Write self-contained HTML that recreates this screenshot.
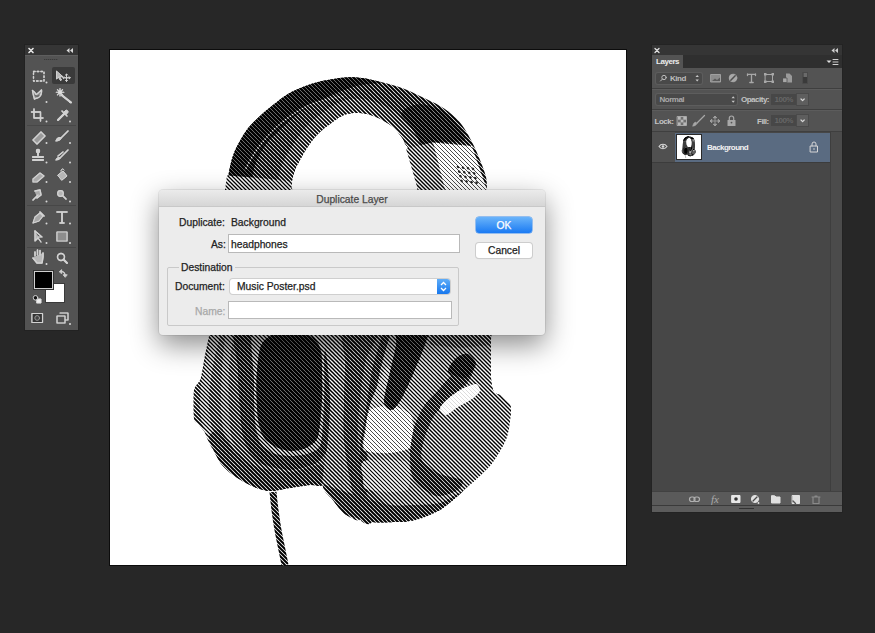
<!DOCTYPE html>
<html><head><meta charset="utf-8">
<style>
*{margin:0;padding:0;box-sizing:border-box}
html,body{width:875px;height:633px;overflow:hidden;background:#272727;font-family:"Liberation Sans",sans-serif}
.a{position:absolute}
.dt{font-size:10.3px;color:#222;white-space:nowrap;line-height:13px;-webkit-text-stroke:.25px currentColor}
.lt{font-size:8px;color:#cfcfcf;white-space:nowrap;line-height:10px}
</style></head>
<body>
<div class="a" style="left:25px;top:45px;width:53px;height:285px;background:#535353;box-shadow:0 0 0 1px #222"></div>
<div class="a" style="left:25px;top:45px;width:53px;height:10px;background:#353535"></div>
<div class="a" style="left:25px;top:55px;width:53px;height:1px;background:#5e5e5e"></div>
<div class="a" style="left:44px;top:59px;width:14px;height:1px;background:repeating-linear-gradient(90deg,#3a3a3a 0 1px,#4a4a4a 1px 2px)"></div>
<div class="a" style="left:52px;top:67px;width:23px;height:17px;background:#3a3a3a;border-radius:2px"></div>
<div class="a" style="left:27px;top:125px;width:49px;height:1px;background:#474747"></div>
<div class="a" style="left:27px;top:205px;width:49px;height:1px;background:#474747"></div>
<div class="a" style="left:27px;top:247px;width:49px;height:1px;background:#474747"></div>
<div class="a" style="left:45px;top:283px;width:20px;height:19.5px;background:#fff;border:1px solid #3a3a3a"></div>
<div class="a" style="left:34px;top:271px;width:19px;height:18px;background:#000;border:1px solid #cfcfcf;box-shadow:0 0 0 1px #333"></div>
<svg class="a" style="left:0;top:0" width="875" height="633" viewBox="0 0 875 633">
 <g fill="none" stroke="#d2d2d2" stroke-width="1.2" stroke-linecap="round" stroke-linejoin="round" style="filter:drop-shadow(0 0 .35px #bdbdbd)">
  <!-- title X and << -->
  <path d="M29 48.5l4 4M33 48.5l-4 4" stroke="#e0e0e0" stroke-width="1.3"/>
  <!-- marquee -->
  <rect x="33.5" y="71.5" width="10.5" height="9.5" stroke-dasharray="1.6 2.1" stroke-width="1.3"/>
  <!-- move -->
  <path d="M56.5 71.5v7.5l2-1.8 2 3.3 1-.6-2-3.2h3z" fill="#b8b8b8" stroke-width=".9"/>
  <path d="M66.5 74.5v6.5M63.2 77.8h6.6" stroke-width="1"/><path d="M65.5 75l1-1 1 1M65.5 80.5l1 1 1-1M63.7 76.8l-1 1 1 1M69.3 76.8l1 1-1 1" stroke-width=".8"/>
  <!-- lasso -->
  <path d="M32.5 90.5c1.5 1 3 2.5 3.5 4 1.5-.5 3.5-2.5 5.5-4.5.3 2.5-.5 5.5-3 7.5-1.5 1-3 .5-4 1.5-.8-2.5-1.5-5.5-2-8.5z" stroke-width="1.4" fill="#8a8a8a"/><path d="M35 95.5c1 .8 2.5 1 4 .3" stroke="#555" stroke-width="1"/>
  <!-- wand -->
  <path d="M61.5 95l9.5 7.5" stroke-width="2"/>
  <path d="M60 88.5v7.5M56.3 92.2h7.5M57.4 89.6l5.2 5.2M62.6 89.6l-5.2 5.2" stroke-width="1.1"/><circle cx="60" cy="92.2" r="1.8" fill="#dcdcdc" stroke="none"/>
  <!-- crop -->
  <path d="M34 109v9h9M31.5 112h9v9" stroke-width="1.4"/>
  <!-- eyedropper -->
  <path d="M58 120l6.5-6.5" stroke-width="2"/><path d="M63.5 112.5l2-2a1.6 1.6 0 0 1 2.2 2.2l-2 2z" fill="#cfcfcf" stroke-width="1"/><path d="M62 111l5 5" stroke-width="1.2"/>
  <!-- healing -->
  <path d="M33 140l8-8 4 4-8 8z" stroke-width="1.3" fill="#9a9a9a"/>
  <!-- brush -->
  <path d="M60 139l8-8" stroke-width="1.4"/><path d="M56 141c1-3 3-4 5-3-1 2-3 3-5 3z" fill="#cfcfcf"/>
  <!-- stamp -->
  <path d="M38 151v4M33 157h10M33 160h10" stroke-width="2"/><circle cx="38" cy="151" r="1.6" fill="#cfcfcf"/>
  <!-- history brush -->
  <path d="M60 158l8-8M58 156l5-4" stroke-width="1.3"/><path d="M56 160c1-2 3-3 4-2-1 2-2 2-4 2z" fill="#cfcfcf"/>
  <!-- eraser -->
  <path d="M33 179l7-6 4 3-7 6h-4z" fill="#aaaaaa" stroke-width="1.1"/>
  <!-- bucket -->
  <path d="M58 175l5-4 4 5-5 4z" fill="#b5b5b5" stroke-width="1"/><path d="M61 171c0-2 2-3 3-1" stroke-width="1"/>
  <!-- smudge -->
  <path d="M33 200l5-5M35 191l5-1 1 5-4 3" stroke-width="1.4" fill="#a8a8a8"/>
  <!-- dodge -->
  <circle cx="60.5" cy="193.5" r="2.8" fill="#b5b5b5"/><path d="M62.5 195.5l3.5 3.5" stroke-width="1.5"/>
  <!-- pen -->
  <path d="M33 223l2-6 5-4 3 3-4 5z" fill="#a8a8a8" stroke-width="1.1"/><path d="M40 212l4 4" stroke-width="1.5"/>
  <!-- T -->
  <path d="M57 212h10M62 212v11M60 223h4" stroke-width="1.6"/>
  <!-- path select -->
  <path d="M35 231v10l3-3 3 4" fill="#b8b8b8" stroke-width="1.2"/><path d="M35 231l7 6h-4"/>
  <!-- rect -->
  <rect x="57" y="232" width="10" height="9" fill="#8d8d8d" stroke-width="1.2"/>
  <!-- hand -->
  <path d="M33 258l4 5h5l1-6v-4M35 256v-4M37.5 255v-5M40 255v-4.5" stroke-width="1.5" fill="#b8b8b8"/>
  <!-- zoom -->
  <circle cx="61" cy="257" r="3.5" stroke-width="1.4"/><path d="M63.5 259.5l3.5 3.5" stroke-width="1.8"/>
  <!-- swap -->
  <path d="M61 271.5c2.5 0 4 1.5 4 4" stroke-width="1.1"/><path d="M59.5 271.5l2.2-1.8v3.6z M65 277l-1.8-2.2h3.6z" fill="#cfcfcf" stroke-width=".6"/>
  <!-- default colors -->
  <rect x="37" y="299" width="4" height="4" fill="#eee" stroke="#ddd" stroke-width=".8"/><circle cx="35.5" cy="297.8" r="2.2" fill="#111" stroke="#ddd" stroke-width=".8"/>
  <!-- quick mask -->
  <rect x="32" y="313.5" width="10.5" height="9" fill="#333" stroke-width="1.2"/><circle cx="37.2" cy="318" r="2.4" fill="#444" stroke="#9a9a9a" stroke-width="1"/>
  <!-- screen mode -->
  <path d="M57 316h8v7h-8z M60 313h8v7h-3" stroke-width="1.1"/>
 </g>
 <g fill="#d8d8d8">
  <path d="M67.5 48l-3 2.5 3 2.5zM71 48l-3 2.5 3 2.5z" transform="translate(2,0)"/>
  <circle cx="46.5" cy="82.5" r="1"/><circle cx="46.5" cy="102" r="1"/><circle cx="70" cy="102" r="1"/>
  <circle cx="46.5" cy="121.5" r="1"/><circle cx="70" cy="121.5" r="1"/>
  <circle cx="46.5" cy="143" r="1"/><circle cx="70" cy="143" r="1"/>
  <circle cx="46.5" cy="162.5" r="1"/><circle cx="70" cy="162.5" r="1"/>
  <circle cx="46.5" cy="182" r="1"/><circle cx="70" cy="182" r="1"/>
  <circle cx="46.5" cy="201.5" r="1"/><circle cx="70" cy="201.5" r="1"/>
  <circle cx="46.5" cy="223.5" r="1"/><circle cx="70" cy="223.5" r="1"/>
  <circle cx="46.5" cy="243" r="1"/><circle cx="70" cy="243" r="1"/>
  <circle cx="46.5" cy="264" r="1"/>
  <circle cx="70" cy="324" r="1"/>
 </g>
</svg>
<div class="a" style="left:110px;top:50px;width:516px;height:515px;background:#fff;box-shadow:0 0 0 1px #0c0c0c"></div>
<svg class="a" style="left:0;top:0" width="875" height="633" viewBox="0 0 875 633">
<defs>
<pattern id="p0" patternUnits="userSpaceOnUse" width="4" height="4"><rect width="4" height="4" fill="#fff"/></pattern>
<pattern id="p1" patternUnits="userSpaceOnUse" width="4" height="4"><rect width="4" height="4" fill="#fff"/><path d="M-4 -8L8 4M-4 -4L8 8M-4 0L8 12" stroke="#000" stroke-width="0.141"/></pattern>
<pattern id="p2" patternUnits="userSpaceOnUse" width="4" height="4"><rect width="4" height="4" fill="#fff"/><path d="M-4 -8L8 4M-4 -4L8 8M-4 0L8 12" stroke="#000" stroke-width="0.283"/></pattern>
<pattern id="p3" patternUnits="userSpaceOnUse" width="4" height="4"><rect width="4" height="4" fill="#fff"/><path d="M-4 -8L8 4M-4 -4L8 8M-4 0L8 12" stroke="#000" stroke-width="0.424"/></pattern>
<pattern id="p4" patternUnits="userSpaceOnUse" width="4" height="4"><rect width="4" height="4" fill="#fff"/><path d="M-4 -8L8 4M-4 -4L8 8M-4 0L8 12" stroke="#000" stroke-width="0.566"/></pattern>
<pattern id="p5" patternUnits="userSpaceOnUse" width="4" height="4"><rect width="4" height="4" fill="#fff"/><path d="M-4 -8L8 4M-4 -4L8 8M-4 0L8 12" stroke="#000" stroke-width="0.707"/></pattern>
<pattern id="p6" patternUnits="userSpaceOnUse" width="4" height="4"><rect width="4" height="4" fill="#fff"/><path d="M-4 -8L8 4M-4 -4L8 8M-4 0L8 12" stroke="#000" stroke-width="0.849"/></pattern>
<pattern id="p7" patternUnits="userSpaceOnUse" width="4" height="4"><rect width="4" height="4" fill="#fff"/><path d="M-4 -8L8 4M-4 -4L8 8M-4 0L8 12" stroke="#000" stroke-width="0.990"/></pattern>
<pattern id="p8" patternUnits="userSpaceOnUse" width="4" height="4"><rect width="4" height="4" fill="#fff"/><path d="M-4 -8L8 4M-4 -4L8 8M-4 0L8 12" stroke="#000" stroke-width="1.131"/></pattern>
<pattern id="p9" patternUnits="userSpaceOnUse" width="4" height="4"><rect width="4" height="4" fill="#fff"/><path d="M-4 -8L8 4M-4 -4L8 8M-4 0L8 12" stroke="#000" stroke-width="1.273"/></pattern>
<pattern id="p10" patternUnits="userSpaceOnUse" width="4" height="4"><rect width="4" height="4" fill="#fff"/><path d="M-4 -8L8 4M-4 -4L8 8M-4 0L8 12" stroke="#000" stroke-width="1.414"/></pattern>
<pattern id="p11" patternUnits="userSpaceOnUse" width="4" height="4"><rect width="4" height="4" fill="#fff"/><path d="M-4 -8L8 4M-4 -4L8 8M-4 0L8 12" stroke="#000" stroke-width="1.556"/></pattern>
<pattern id="p12" patternUnits="userSpaceOnUse" width="4" height="4"><rect width="4" height="4" fill="#fff"/><path d="M-4 -8L8 4M-4 -4L8 8M-4 0L8 12" stroke="#000" stroke-width="1.697"/></pattern>
<pattern id="p13" patternUnits="userSpaceOnUse" width="4" height="4"><rect width="4" height="4" fill="#fff"/><path d="M-4 -8L8 4M-4 -4L8 8M-4 0L8 12" stroke="#000" stroke-width="1.838"/></pattern>
<pattern id="p14" patternUnits="userSpaceOnUse" width="4" height="4"><rect width="4" height="4" fill="#fff"/><path d="M-4 -8L8 4M-4 -4L8 8M-4 0L8 12" stroke="#000" stroke-width="1.980"/></pattern>
<pattern id="p15" patternUnits="userSpaceOnUse" width="4" height="4"><rect width="4" height="4" fill="#fff"/><path d="M-4 -8L8 4M-4 -4L8 8M-4 0L8 12" stroke="#000" stroke-width="2.121"/></pattern>
<pattern id="p16" patternUnits="userSpaceOnUse" width="4" height="4"><rect width="4" height="4" fill="#fff"/><path d="M-4 -8L8 4M-4 -4L8 8M-4 0L8 12" stroke="#000" stroke-width="2.263"/></pattern>
<pattern id="p17" patternUnits="userSpaceOnUse" width="4" height="4"><rect width="4" height="4" fill="#fff"/><path d="M-4 -8L8 4M-4 -4L8 8M-4 0L8 12" stroke="#000" stroke-width="2.404"/></pattern>
<pattern id="p18" patternUnits="userSpaceOnUse" width="4" height="4"><rect width="4" height="4" fill="#fff"/><path d="M-4 -8L8 4M-4 -4L8 8M-4 0L8 12" stroke="#000" stroke-width="2.546"/></pattern>
<pattern id="p19" patternUnits="userSpaceOnUse" width="4" height="4"><rect width="4" height="4" fill="#fff"/><path d="M-4 -8L8 4M-4 -4L8 8M-4 0L8 12" stroke="#000" stroke-width="2.687"/></pattern>
<pattern id="p20" patternUnits="userSpaceOnUse" width="4" height="4"><rect width="4" height="4" fill="#000"/></pattern>
</defs><g id="hp"><path d="M226.0 188.0L292.0 188.0L300.0 260.0L336.0 330.0L209.0 330.0L215.0 260.0Z" fill="url(#p12)" />
<path d="M418.0 188.0L487.0 188.0L492.0 260.0L491.0 330.0L395.0 330.0L415.0 260.0Z" fill="url(#p12)" />
<path d="M226.0 190.0C226.5 187.0 227.7 178.2 229.0 172.0C230.3 165.8 231.2 159.8 234.0 153.0C236.8 146.2 241.7 137.2 246.0 131.0C250.3 124.8 255.5 120.3 260.0 116.0C264.5 111.7 268.3 108.7 273.0 105.0C277.7 101.3 282.8 97.1 288.0 94.0C293.2 90.9 298.3 88.7 304.0 86.5C309.7 84.3 315.2 82.5 322.0 81.0C328.8 79.5 338.3 78.0 345.0 77.5C351.7 77.0 356.0 77.2 362.0 78.0C368.0 78.8 374.3 80.3 381.0 82.0C387.7 83.7 395.2 85.5 402.0 88.0C408.8 90.5 415.7 94.0 422.0 97.0C428.3 100.0 434.5 102.7 440.0 106.0C445.5 109.3 451.0 113.3 455.0 117.0C459.0 120.7 461.2 123.8 464.0 128.0C466.8 132.2 469.3 136.7 472.0 142.0C474.7 147.3 477.7 154.2 480.0 160.0C482.3 165.8 484.8 171.8 486.0 177.0C487.2 182.2 486.8 188.7 487.0 191.0L418.0 191.0C417.3 187.2 415.7 175.2 414.0 168.0C412.3 160.8 410.3 153.5 408.0 148.0C405.7 142.5 402.8 138.8 400.0 135.0C397.2 131.2 395.0 128.5 391.0 125.5C387.0 122.5 381.2 119.1 376.0 117.0C370.8 114.9 365.3 113.3 360.0 113.0C354.7 112.7 349.3 112.9 344.0 115.0C338.7 117.1 332.7 122.0 328.0 125.5C323.3 129.0 319.5 132.2 316.0 136.0C312.5 139.8 309.7 144.0 307.0 148.0C304.3 152.0 302.0 156.3 300.0 160.0C298.0 163.7 296.3 166.5 295.0 170.0C293.7 173.5 292.7 177.5 292.0 181.0C291.3 184.5 291.2 189.3 291.0 191.0Z" fill="url(#p14)" />
<path d="M226.0 190.0C226.5 187.0 227.7 178.2 229.0 172.0C230.3 165.8 231.2 159.8 234.0 153.0C236.8 146.2 241.7 137.2 246.0 131.0C250.3 124.8 255.5 120.3 260.0 116.0C264.5 111.7 268.3 108.7 273.0 105.0C277.7 101.3 282.8 97.1 288.0 94.0C293.2 90.9 298.3 88.7 304.0 86.5C309.7 84.3 315.2 82.5 322.0 81.0C328.8 79.5 338.3 78.0 345.0 77.5C351.7 77.0 356.0 77.2 362.0 78.0C368.0 78.8 377.8 81.3 381.0 82.0L380.8 83.0C377.6 83.3 367.5 83.9 361.7 85.0C355.9 86.1 351.9 87.4 346.0 89.5C340.2 91.5 332.2 94.8 326.5 97.4C320.8 100.0 316.5 102.3 312.0 104.8C307.5 107.4 303.6 109.8 299.5 112.8C295.4 115.7 291.3 119.4 287.7 122.7C284.0 126.0 281.2 128.7 277.6 132.3C274.0 135.9 269.5 139.4 265.9 144.4C262.3 149.4 258.4 156.8 256.1 162.4C253.8 168.0 253.3 173.0 252.2 178.0C251.2 183.1 250.2 190.3 249.8 192.8Z" fill="url(#p18)" />
<path d="M402.0 112.0C404.3 107.6 414.5 104.1 420.0 104.0C425.5 103.9 438.2 108.5 443.0 111.0C447.8 113.5 453.1 119.1 456.0 123.0C458.9 126.9 468.1 137.4 465.0 140.0C461.9 142.6 440.5 141.6 433.0 142.5C425.5 143.4 413.0 147.7 409.0 147.0C405.0 146.3 403.9 141.7 403.0 137.0C402.1 132.3 399.7 116.4 402.0 112.0Z" fill="url(#p17)" />
<path d="M277.3 188.0C277.6 186.0 278.0 180.2 278.9 176.0C279.8 171.8 281.2 167.1 282.9 162.9C284.6 158.8 286.7 155.4 289.2 151.1C291.7 146.9 294.7 141.8 298.0 137.3C301.3 132.7 304.9 128.0 309.1 123.8C313.4 119.6 318.0 116.0 323.5 112.2C329.0 108.5 336.1 103.3 342.3 101.1C348.5 98.9 354.6 98.6 360.8 99.0C366.9 99.4 373.2 101.1 379.2 103.4C385.3 105.7 392.1 109.4 396.8 112.7C401.5 116.1 404.1 119.1 407.6 123.2C411.0 127.4 414.5 131.5 417.5 137.7C420.6 144.0 423.5 152.2 425.9 160.6C428.2 168.9 430.7 183.4 431.7 188.0L418.0 191.0C417.3 187.2 415.7 175.2 414.0 168.0C412.3 160.8 410.3 153.5 408.0 148.0C405.7 142.5 402.8 138.8 400.0 135.0C397.2 131.2 395.0 128.5 391.0 125.5C387.0 122.5 381.2 119.1 376.0 117.0C370.8 114.9 365.3 113.3 360.0 113.0C354.7 112.7 349.3 112.9 344.0 115.0C338.7 117.1 332.7 122.0 328.0 125.5C323.3 129.0 319.5 132.2 316.0 136.0C312.5 139.8 309.7 144.0 307.0 148.0C304.3 152.0 302.0 156.3 300.0 160.0C298.0 163.7 296.3 166.5 295.0 170.0C293.7 173.5 292.7 177.5 292.0 181.0C291.3 184.5 291.2 189.3 291.0 191.0Z" fill="url(#p12)" />
<path d="M245.0 170.0C247.2 166.3 252.2 155.7 258.0 148.0C263.8 140.3 271.1 131.3 280.0 124.0C288.9 116.7 300.9 108.7 311.7 104.0C322.5 99.3 339.4 97.3 345.0 96.0" fill="none" stroke="url(#p12)" stroke-width="1.6"/>
<path d="M225.0 190.0L227.0 175.5L260.0 178.0L292.0 181.5L291.0 190.0Z" fill="url(#p9)" />
<path d="M406.0 148.5L433.0 142.5L445.0 190.0L418.0 190.0Z" fill="url(#p10)" />
<path d="M433.0 142.5L472.0 146.0L487.0 190.0L445.0 190.0Z" fill="url(#p5)" />
<ellipse cx="458.0" cy="167.0" rx="1.5" ry="1.1" fill="#222" transform="rotate(40 458.0 167.0)"/>
<ellipse cx="459.2" cy="171.6" rx="1.5" ry="1.1" fill="#222" transform="rotate(40 459.2 171.6)"/>
<ellipse cx="460.4" cy="176.2" rx="1.5" ry="1.1" fill="#222" transform="rotate(40 460.4 176.2)"/>
<ellipse cx="461.6" cy="180.8" rx="1.5" ry="1.1" fill="#222" transform="rotate(40 461.6 180.8)"/>
<ellipse cx="463.0" cy="167.6" rx="1.5" ry="1.1" fill="#222" transform="rotate(40 463.0 167.6)"/>
<ellipse cx="464.2" cy="172.2" rx="1.5" ry="1.1" fill="#222" transform="rotate(40 464.2 172.2)"/>
<ellipse cx="465.4" cy="176.8" rx="1.5" ry="1.1" fill="#222" transform="rotate(40 465.4 176.8)"/>
<ellipse cx="466.6" cy="181.4" rx="1.5" ry="1.1" fill="#222" transform="rotate(40 466.6 181.4)"/>
<ellipse cx="468.0" cy="168.2" rx="1.5" ry="1.1" fill="#222" transform="rotate(40 468.0 168.2)"/>
<ellipse cx="469.2" cy="172.8" rx="1.5" ry="1.1" fill="#222" transform="rotate(40 469.2 172.8)"/>
<ellipse cx="470.4" cy="177.4" rx="1.5" ry="1.1" fill="#222" transform="rotate(40 470.4 177.4)"/>
<ellipse cx="471.6" cy="182.0" rx="1.5" ry="1.1" fill="#222" transform="rotate(40 471.6 182.0)"/>
<ellipse cx="473.0" cy="168.8" rx="1.5" ry="1.1" fill="#222" transform="rotate(40 473.0 168.8)"/>
<ellipse cx="474.2" cy="173.4" rx="1.5" ry="1.1" fill="#222" transform="rotate(40 474.2 173.4)"/>
<ellipse cx="475.4" cy="178.0" rx="1.5" ry="1.1" fill="#222" transform="rotate(40 475.4 178.0)"/>
<ellipse cx="476.6" cy="182.6" rx="1.5" ry="1.1" fill="#222" transform="rotate(40 476.6 182.6)"/>
<path d="M240.0 322.0C209.8 322.0 214.6 320.4 211.0 322.0C207.4 323.6 209.7 332.1 209.0 336.0C208.3 339.9 206.0 350.1 205.0 355.0C204.0 359.9 202.0 374.3 200.7 378.4C199.4 382.5 194.8 385.3 194.0 390.0C193.2 394.7 193.5 414.7 194.0 418.7C194.5 422.7 196.3 421.8 198.0 424.0C199.7 426.2 206.3 433.1 208.8 437.5C211.3 441.9 216.8 457.3 219.6 461.7C222.4 466.1 229.2 472.2 233.0 475.0C236.8 477.8 247.5 484.1 251.8 486.0C256.1 487.9 265.5 490.8 270.0 491.0C274.5 491.2 285.3 488.7 290.0 488.0C294.7 487.3 306.2 485.4 310.0 485.0C313.8 484.6 319.9 483.2 322.6 485.0C325.3 486.8 330.4 496.6 333.0 500.0C335.6 503.4 341.7 511.8 344.8 514.0C347.9 516.2 356.4 518.0 360.0 519.0C363.6 520.0 371.9 522.1 376.0 522.5C380.1 522.9 391.1 522.2 395.0 522.0C398.9 521.8 404.5 522.3 409.6 521.0C414.7 519.7 432.8 514.1 439.0 510.6C445.2 507.1 457.0 496.3 463.0 491.0C469.0 485.7 485.6 471.0 490.6 465.0C495.6 459.0 503.7 444.8 506.0 439.5C508.3 434.2 509.5 423.9 510.0 420.0C510.5 416.1 511.4 408.8 510.5 406.0C509.6 403.2 503.9 397.6 502.0 396.0C500.1 394.4 495.3 394.1 494.0 392.0C492.7 389.9 491.4 384.1 491.0 378.0C490.6 371.9 491.0 346.5 491.0 340.0C491.0 333.5 493.4 324.1 491.0 322.0C488.6 319.9 499.3 322.0 470.0 322.0C440.7 322.0 270.2 322.0 240.0 322.0Z" fill="url(#p12)" />
<path d="M212.0 334.0C210.1 337.5 207.5 353.2 206.0 360.0C204.5 366.8 201.8 378.3 201.0 385.0C200.2 391.7 199.6 404.0 200.0 410.0C200.4 416.0 202.4 424.9 204.0 430.0C205.6 435.1 210.1 445.9 212.0 448.0C213.9 450.1 218.0 448.7 218.0 446.0C218.0 443.3 213.2 433.1 212.0 428.0C210.8 422.9 209.3 413.7 209.0 408.0C208.7 402.3 209.3 391.4 210.0 385.0C210.7 378.6 212.7 366.8 214.0 360.0C215.3 353.2 220.3 337.5 220.0 334.0C219.7 330.5 213.9 330.5 212.0 334.0Z" fill="url(#p9)" />
<path d="M226.0 334.0C224.5 338.8 222.7 359.9 222.0 370.0C221.3 380.1 220.5 400.0 221.0 410.0C221.5 420.0 224.0 438.1 226.0 445.0C228.0 451.9 234.1 460.3 236.0 462.0C237.9 463.7 240.5 460.9 240.0 458.0C239.5 455.1 233.5 446.4 232.0 440.0C230.5 433.6 229.4 419.3 229.0 410.0C228.6 400.7 228.5 380.1 229.0 370.0C229.5 359.9 233.4 338.8 233.0 334.0C232.6 329.2 227.5 329.2 226.0 334.0Z" fill="url(#p10)" />
<path d="M240.0 322.0C226.9 328.4 238.0 358.3 238.0 370.0C238.0 381.7 239.2 400.7 240.0 410.0C240.8 419.3 241.6 433.1 244.0 440.0C246.4 446.9 251.9 458.0 258.0 462.0C264.1 466.0 282.0 470.0 290.0 470.0C298.0 470.0 312.4 466.0 318.0 462.0C323.6 458.0 329.3 448.3 332.0 440.0C334.7 431.7 337.2 410.7 338.0 400.0C338.8 389.3 338.3 370.4 338.0 360.0C337.7 349.6 349.1 327.1 336.0 322.0C322.9 316.9 253.1 315.6 240.0 322.0Z" fill="url(#p16)" />
<path d="M208.8 437.5C208.7 441.7 216.4 456.7 219.6 461.7C222.8 466.7 228.7 471.8 233.0 475.0C237.3 478.2 246.9 483.9 251.8 486.0C256.7 488.1 264.9 490.7 270.0 491.0C275.1 491.3 284.7 488.8 290.0 488.0C295.3 487.2 305.7 485.4 310.0 485.0C314.3 484.6 321.0 487.7 322.6 485.0C324.2 482.3 326.3 466.7 322.0 465.0C317.7 463.3 298.9 471.9 290.0 472.0C281.1 472.1 262.3 468.9 255.0 466.0C247.7 463.1 239.7 454.8 235.0 450.0C230.3 445.2 223.5 431.7 220.0 430.0C216.5 428.3 208.9 433.3 208.8 437.5Z" fill="url(#p14)" />
<path d="M256.0 322.0C246.9 329.7 254.1 366.9 254.0 380.0C253.9 393.1 254.2 411.7 255.0 420.0C255.8 428.3 257.6 437.6 260.0 442.0C262.4 446.4 268.9 451.1 273.0 453.0C277.1 454.9 286.1 456.0 291.0 456.0C295.9 456.0 306.0 454.7 310.0 453.0C314.0 451.3 319.1 450.1 321.0 443.0C322.9 435.9 323.6 411.1 324.0 400.0C324.4 388.9 324.3 370.4 324.0 360.0C323.7 349.6 331.1 327.1 322.0 322.0C312.9 316.9 265.1 314.3 256.0 322.0Z" fill="url(#p10)" />
<path d="M285.0 333.0C281.0 333.4 273.3 334.0 270.0 336.0C266.7 338.0 261.8 342.0 260.0 348.0C258.2 354.0 256.7 371.4 256.4 381.0C256.1 390.6 256.9 412.3 258.0 420.0C259.1 427.7 261.9 435.1 264.6 438.8C267.3 442.5 274.4 446.4 278.0 448.0C281.6 449.6 287.6 451.0 291.3 451.0C295.0 451.0 302.4 449.9 306.0 448.0C309.6 446.1 315.9 443.2 318.0 436.8C320.1 430.4 321.5 408.9 322.0 400.0C322.5 391.1 322.1 376.7 322.0 370.0C321.9 363.3 322.1 354.3 321.0 350.0C319.9 345.7 316.8 340.3 314.0 338.0C311.2 335.7 303.9 333.7 300.0 333.0C296.1 332.3 289.0 332.6 285.0 333.0Z" fill="url(#p18)" />
<path d="M322.0 322.0C320.0 327.1 325.9 349.6 327.0 360.0C328.1 370.4 329.9 389.3 330.0 400.0C330.1 410.7 329.0 428.7 328.0 440.0C327.0 451.3 321.9 477.0 322.6 485.0C323.3 493.0 330.0 496.1 333.0 500.0C336.0 503.9 341.2 511.5 344.8 514.0C348.4 516.5 359.3 523.5 360.0 519.0C360.7 514.5 352.1 490.5 350.0 480.0C347.9 469.5 344.8 450.7 344.0 440.0C343.2 429.3 343.9 410.7 344.0 400.0C344.1 389.3 345.3 370.4 345.0 360.0C344.7 349.6 345.1 327.1 342.0 322.0C338.9 316.9 324.0 316.9 322.0 322.0Z" fill="url(#p11)" />
<path d="M342.0 322.0C337.1 327.1 344.7 349.6 345.0 360.0C345.3 370.4 344.1 389.3 344.0 400.0C343.9 410.7 343.2 429.3 344.0 440.0C344.8 450.7 347.9 469.5 350.0 480.0C352.1 490.5 357.1 513.5 360.0 519.0C362.9 524.5 371.5 526.2 372.0 521.0C372.5 515.8 365.9 490.8 364.0 480.0C362.1 469.2 358.5 450.7 358.0 440.0C357.5 429.3 358.9 410.7 360.0 400.0C361.1 389.3 363.1 370.4 366.0 360.0C368.9 349.6 385.2 327.1 382.0 322.0C378.8 316.9 346.9 316.9 342.0 322.0Z" fill="url(#p14)" />
<path d="M378.0 322.0C376.4 323.7 382.8 328.6 382.0 335.0C381.2 341.4 374.1 360.0 372.0 370.0C369.9 380.0 367.6 399.3 366.0 410.0C364.4 420.7 360.5 439.5 360.0 450.0C359.5 460.5 360.9 483.8 362.0 489.0C363.1 494.2 367.3 494.2 368.0 489.0C368.7 483.8 366.3 460.5 367.0 450.0C367.7 439.5 371.3 420.4 373.0 410.0C374.7 399.6 377.7 382.0 380.0 372.0C382.3 362.0 388.1 341.7 390.0 335.0C391.9 328.3 395.6 323.7 394.0 322.0C392.4 320.3 379.6 320.3 378.0 322.0Z" fill="url(#p16)" />
<path d="M392.0 322.0C402.7 320.3 456.8 322.0 470.0 322.0C483.2 322.0 488.2 319.6 491.0 322.0C493.8 324.4 491.0 332.5 491.0 340.0C491.0 347.5 490.6 371.1 491.0 378.0C491.4 384.9 492.5 389.6 494.0 392.0C495.5 394.4 499.8 394.1 502.0 396.0C504.2 397.9 509.4 402.8 510.5 406.0C511.6 409.2 510.6 415.5 510.0 420.0C509.4 424.5 508.6 433.5 506.0 439.5C503.4 445.5 496.3 458.1 490.6 465.0C484.9 471.9 469.9 484.9 463.0 491.0C456.1 497.1 446.1 506.6 439.0 510.6C431.9 514.6 416.1 521.7 409.6 521.0C403.1 520.3 395.0 509.3 390.0 505.0C385.0 500.7 374.9 496.3 372.0 489.0C369.1 481.7 367.9 460.5 368.0 450.0C368.1 439.5 371.4 420.4 373.0 410.0C374.6 399.6 377.7 382.0 380.0 372.0C382.3 362.0 388.4 341.7 390.0 335.0C391.6 328.3 381.3 323.7 392.0 322.0Z" fill="url(#p10)" />
<path d="M412.0 360.0C414.8 354.7 421.3 349.7 425.0 350.0C428.7 350.3 439.3 356.0 440.0 362.0C440.7 368.0 433.7 387.3 430.0 395.0C426.3 402.7 416.0 416.9 412.0 420.0C408.0 423.1 401.1 422.0 400.0 418.0C398.9 414.0 402.4 397.7 404.0 390.0C405.6 382.3 409.2 365.3 412.0 360.0Z" fill="url(#p9)" />
<path d="M388.0 367.0C385.1 365.3 380.4 379.9 378.0 385.0C375.6 390.1 371.7 399.0 370.0 405.0C368.3 411.0 365.8 424.0 365.0 430.0C364.2 436.0 360.7 447.1 364.0 450.0C367.3 452.9 383.6 452.4 390.0 452.0C396.4 451.6 408.8 449.9 412.0 447.0C415.2 444.1 414.0 434.7 414.0 430.0C414.0 425.3 413.9 416.3 412.0 412.0C410.1 407.7 403.2 404.0 400.0 398.0C396.8 392.0 390.9 368.7 388.0 367.0Z" fill="url(#p8)" />
<path d="M370.0 410.0C366.5 413.2 366.7 424.7 366.0 430.0C365.3 435.3 361.8 446.9 365.0 450.0C368.2 453.1 383.9 453.4 390.0 453.0C396.1 452.6 407.9 450.1 411.0 447.0C414.1 443.9 413.1 434.4 413.0 430.0C412.9 425.6 412.8 417.2 410.0 414.0C407.2 410.8 397.3 406.5 392.0 406.0C386.7 405.5 373.5 406.8 370.0 410.0Z" fill="url(#p5)" />
<path d="M364.0 461.0C358.5 463.3 362.7 474.3 363.0 478.0C363.3 481.7 362.4 487.1 366.0 489.0C369.6 490.9 384.4 492.0 390.0 492.0C395.6 492.0 405.3 491.9 408.0 489.0C410.7 486.1 410.5 473.7 410.0 470.0C409.5 466.3 410.1 462.2 404.0 461.0C397.9 459.8 369.5 458.7 364.0 461.0Z" fill="url(#p8)" />
<path d="M398.0 322.0C402.5 318.9 426.3 319.3 430.0 322.0C433.7 324.7 428.1 335.3 426.0 342.0C423.9 348.7 417.2 364.5 414.0 372.0C410.8 379.5 404.9 392.9 402.0 398.0C399.1 403.1 394.4 409.5 392.0 410.0C389.6 410.5 384.3 407.1 384.0 402.0C383.7 396.9 388.4 379.6 390.0 372.0C391.6 364.4 394.9 351.7 396.0 345.0C397.1 338.3 393.5 325.1 398.0 322.0Z" fill="url(#p17)" />
<path d="M410.0 455.0C410.0 448.1 412.1 434.5 414.0 428.0C415.9 421.5 420.5 411.3 424.0 406.0C427.5 400.7 436.3 392.3 440.0 388.0C443.7 383.7 449.3 377.2 452.0 374.0C454.7 370.8 457.1 365.1 460.0 364.0C462.9 362.9 472.9 363.6 474.0 366.0C475.1 368.4 471.2 377.7 468.0 382.0C464.8 386.3 454.5 393.5 450.0 398.0C445.5 402.5 437.5 410.4 434.0 416.0C430.5 421.6 425.6 434.1 424.0 440.0C422.4 445.9 419.9 455.5 422.0 460.0C424.1 464.5 434.7 471.3 440.0 474.0C445.3 476.7 459.6 477.9 462.0 480.0C464.4 482.1 461.5 487.9 458.0 490.0C454.5 492.1 441.9 497.3 436.0 496.0C430.1 494.7 417.5 485.5 414.0 480.0C410.5 474.5 410.0 461.9 410.0 455.0Z" fill="url(#p15)" />
<path d="M448.0 372.0C446.7 369.3 453.3 360.4 456.0 358.0C458.7 355.6 465.3 353.2 468.0 354.0C470.7 354.8 476.3 360.8 476.0 364.0C475.7 367.2 469.7 376.9 466.0 378.0C462.3 379.1 449.3 374.7 448.0 372.0Z" fill="url(#p17)" />
<path d="M440.0 408.0C440.5 405.6 446.8 399.7 450.0 397.0C453.2 394.3 460.5 389.7 464.0 388.0C467.5 386.3 473.9 383.6 476.0 384.0C478.1 384.4 480.5 389.0 480.0 391.0C479.5 393.0 474.9 396.9 472.0 399.0C469.1 401.1 461.5 404.9 458.0 407.0C454.5 409.1 448.4 414.9 446.0 415.0C443.6 415.1 439.5 410.4 440.0 408.0Z" fill="url(#p1)" />
<path d="M430.0 322.0L491.0 322.0L491.0 345.0L460.0 348.0L430.0 345.0Z" fill="url(#p12)" />
<path d="M322.6 485.0C323.5 483.7 334.7 488.4 340.0 490.0C345.3 491.6 355.3 495.0 362.0 497.0C368.7 499.0 383.3 503.9 390.0 505.0C396.7 506.1 405.3 505.3 412.0 505.0C418.7 504.7 433.2 504.9 440.0 503.0C446.8 501.1 463.1 490.0 463.0 491.0C462.9 492.0 446.1 506.6 439.0 510.6C431.9 514.6 415.5 519.5 409.6 521.0C403.7 522.5 399.5 521.8 395.0 522.0C390.5 522.2 380.7 522.9 376.0 522.5C371.3 522.1 364.2 520.1 360.0 519.0C355.8 517.9 348.4 516.5 344.8 514.0C341.2 511.5 336.0 503.9 333.0 500.0C330.0 496.1 321.7 486.3 322.6 485.0Z" fill="url(#p14)" />
<path d="M273.0 492.0C273.3 495.0 274.2 503.7 275.0 510.0C275.8 516.3 276.8 523.3 278.0 530.0C279.2 536.7 280.8 544.2 282.0 550.0C283.2 555.8 284.5 562.5 285.0 565.0" fill="none" stroke="url(#p14)" stroke-width="7"/></g>
</svg>
<div class="a" style="left:652px;top:45px;width:190px;height:467px;background:#535353;box-shadow:0 0 0 1px #232323"></div>
<div class="a" style="left:652px;top:45px;width:190px;height:10px;background:#353535"></div>
<div class="a" style="left:652px;top:55px;width:190px;height:13px;background:#2f2f2f"></div>
<div class="a" style="left:652px;top:55px;width:31px;height:13px;background:#535353"></div>
<div class="a lt" style="left:656px;top:57px;font-weight:bold;font-size:8px;letter-spacing:-.45px;color:#ececec">Layers</div>
<!-- filter row -->
<div class="a" style="left:656px;top:73px;width:46px;height:11px;background:#494949;border-radius:2px;box-shadow:0 0 0 1px #5d5d5d"></div>
<div class="a lt" style="left:670px;top:73.5px;font-weight:bold;letter-spacing:-.5px;color:#bdbdbd">Kind</div>
<div class="a" style="left:652px;top:88px;width:190px;height:1px;background:#3f3f3f"></div>
<div class="a" style="left:652px;top:89px;width:190px;height:1px;background:#5c5c5c"></div>
<!-- blend row -->
<div class="a" style="left:656px;top:94px;width:81px;height:11px;background:#494949;border-radius:2px;box-shadow:0 0 0 1px #5d5d5d"></div>
<div class="a lt" style="left:659.5px;top:94.5px;font-weight:bold;letter-spacing:-.5px;color:#a9a9a9">Normal</div>
<div class="a lt" style="left:741px;top:95px;font-weight:bold;letter-spacing:-.5px;color:#c4c4c4">Opacity:</div>
<div class="a" style="left:771px;top:94px;width:26px;height:11px;background:#474747"></div>
<div class="a lt" style="left:774.5px;top:95px;font-weight:bold;letter-spacing:-.5px;color:#666">100%</div>
<div class="a" style="left:797px;top:94px;width:11px;height:11px;background:#5e5e5e;box-shadow:0 0 0 1px #4a4a4a"></div>
<div class="a" style="left:652px;top:109px;width:190px;height:1px;background:#3f3f3f"></div>
<div class="a" style="left:652px;top:110px;width:190px;height:1px;background:#5c5c5c"></div>
<!-- lock row -->
<div class="a lt" style="left:654.5px;top:116.5px;font-weight:bold;letter-spacing:-.5px;color:#c4c4c4">Lock:</div>
<div class="a lt" style="left:757px;top:116.5px;font-weight:bold;letter-spacing:-.5px;color:#c4c4c4">Fill:</div>
<div class="a" style="left:771px;top:115px;width:26px;height:11px;background:#474747"></div>
<div class="a lt" style="left:774.5px;top:116px;font-weight:bold;letter-spacing:-.5px;color:#666">100%</div>
<div class="a" style="left:797px;top:115px;width:11px;height:11px;background:#5e5e5e;box-shadow:0 0 0 1px #4a4a4a"></div>
<div class="a" style="left:652px;top:131px;width:190px;height:1px;background:#3f3f3f"></div>
<!-- list -->
<div class="a" style="left:652px;top:132px;width:190px;height:359px;background:#474747"></div>
<div class="a" style="left:830px;top:132px;width:12px;height:359px;background:#4b4b4b;border-left:1px solid #3e3e3e"></div>
<div class="a" style="left:652px;top:132px;width:23px;height:30px;background:#505050"></div>
<div class="a" style="left:675px;top:133px;width:155px;height:29px;background:#5a6b81"></div>
<div class="a" style="left:652px;top:162px;width:178px;height:1px;background:#3c3c3c"></div>
<div class="a" style="left:677px;top:135px;width:24px;height:24px;background:#fff;box-shadow:0 0 0 1px #2a2a2a"></div>
<div class="a lt" style="left:707px;top:143px;color:#f2f2f2;font-weight:bold;letter-spacing:-.55px">Background</div>
<!-- bottom bar -->
<div class="a" style="left:652px;top:491px;width:190px;height:14px;background:#5a5a5a;border-top:1px solid #414141"></div>
<div class="a" style="left:652px;top:505px;width:190px;height:1px;background:#3a3a3a"></div>
<div class="a" style="left:652px;top:506px;width:190px;height:6px;background:#5c5c5c"></div>
<div class="a" style="left:739px;top:508px;width:15px;height:1px;background:#333"></div>
<svg class="a" style="left:0;top:0" width="875" height="633" viewBox="0 0 875 633">
 <g fill="none" stroke="#bdbdbd" stroke-width="1" stroke-linecap="round" stroke-linejoin="round">
  <path d="M655 48.5l4 4M659 48.5l-4 4" stroke="#e0e0e0" stroke-width="1.3"/>
  <circle cx="664" cy="77.5" r="2.2"/><path d="M662.5 79l-2 2"/>
  <path d="M695.5 77l1.7-2 1.7 2zM695.5 79.5l1.7 2 1.7-2z" fill="#c8c8c8" stroke="none"/>
  <path d="M731.5 98.2l1.7-2 1.7 2zM731.5 100.7l1.7 2 1.7-2z" fill="#c8c8c8" stroke="none"/>
  <path d="M801 99l1.6 1.6 1.6-1.6" stroke="#d8d8d8" stroke-width="1.2"/>
  <path d="M801 120l1.6 1.6 1.6-1.6" stroke="#d8d8d8" stroke-width="1.2"/>
  <!-- filter icons -->
  <rect x="711" y="74.5" width="9.5" height="7.5" fill="#8c8c8c" stroke="#a0a0a0" stroke-width="1"/><path d="M712 81l3-2.5 2 1.5 3-2.5v3.5h-8z" fill="#5a5a5a" stroke="none"/>
  <circle cx="733" cy="78" r="3.8" fill="#a8a8a8" stroke="#b0b0b0" stroke-width=".8"/><path d="M730.8 80.2l4.4-4.4" stroke="#4e4e4e" stroke-width="1.5"/>
  <path d="M747.5 74.3h8M751.5 74.3v8.2M749.8 82.5h3.4M747.5 74v1.6M755.5 74v1.6" stroke="#a8a8a8" stroke-width="1.3"/>
  <rect x="765.5" y="74.5" width="7" height="7" stroke="#a8a8a8" stroke-width="1"/><rect x="764" y="73" width="2.5" height="2.5" fill="#a8a8a8" stroke="none"/><rect x="771.5" y="73" width="2.5" height="2.5" fill="#a8a8a8" stroke="none"/><rect x="764" y="80.5" width="2.5" height="2.5" fill="#a8a8a8" stroke="none"/><rect x="771.5" y="80.5" width="2.5" height="2.5" fill="#a8a8a8" stroke="none"/>
  <path d="M786 73.5h3.5l2.5 2.5v6.5h-6z" fill="#9a9a9a" stroke="none"/><rect x="783" y="78" width="4" height="4.5" fill="#a8a8a8" stroke="#535353" stroke-width=".8"/>
  <rect x="803" y="72.5" width="4.5" height="11" fill="#3a3a3a" stroke="#4a4a4a"/><rect x="803.5" y="73" width="3.5" height="4" fill="#6a6a6a" stroke="none"/>
  <!-- lock icons -->
  <rect x="677.5" y="116.5" width="9" height="9" fill="#707070" stroke="#a8a8a8" stroke-width="1"/>
  <g fill="#b8b8b8" stroke="none"><rect x="678" y="117" width="2.7" height="2.7"/><rect x="683.3" y="117" width="2.7" height="2.7"/><rect x="680.7" y="119.7" width="2.7" height="2.7"/><rect x="678" y="122.4" width="2.7" height="2.7"/><rect x="683.3" y="122.4" width="2.7" height="2.7"/></g>
  <path d="M697 123l7.5-7.5" stroke="#a8a8a8" stroke-width="1.3"/><path d="M693 126c1.5 0 3-.5 4-2.5l-1.5-1.5c-2 1-2.5 2.5-2.5 4z" fill="#a8a8a8" stroke="#a8a8a8" stroke-width=".6"/>
  <path d="M715 117.5v7M711.5 121h7" stroke="#9a9a9a" stroke-width=".9"/><path d="M713.5 117.5l1.5-1.5 1.5 1.5zM713.5 124.5l1.5 1.5 1.5-1.5zM711.5 119.5l-1.5 1.5 1.5 1.5zM718.5 119.5l1.5 1.5-1.5 1.5z" fill="#a8a8a8" stroke="#a8a8a8" stroke-width=".8"/>
  <rect x="727.5" y="120" width="8" height="6" rx=".5" fill="#a8a8a8" stroke="none"/><path d="M729.3 120v-1.8a2.2 2.2 0 0 1 4.4 0v1.8" stroke="#a8a8a8" stroke-width="1.2"/><circle cx="731.5" cy="122.6" r=".9" fill="#555" stroke="none"/>
  <!-- eye -->
  <path d="M659 146.5c2-3 6-3 8 0c-2 3-6 3-8 0z" stroke="#d8d8d8" stroke-width="1.1"/><circle cx="663" cy="146.5" r="1.3" fill="#d8d8d8" stroke="none"/>
  <!-- lock layer -->
  <rect x="810.5" y="146" width="7" height="6" stroke="#d5d5d5"/><path d="M812 146v-2a2 2 0 0 1 4 0v2" stroke="#d5d5d5"/><circle cx="814" cy="149" r=".8" fill="#d5d5d5" stroke="none"/>
  <!-- panel menu -->
  <path d="M826.5 60.5l2.5 2.5 2.5-2.5z" fill="#e0e0e0" stroke="none"/><path d="M833 59.5h5M833 62h5M833 64.5h5" stroke="#cfcfcf"/>
  <!-- bottom icons -->
  <rect x="689.5" y="497" width="5.5" height="4.5" rx="2.2" stroke="#b0b0b0" stroke-width="1.2"/><rect x="694" y="497" width="5.5" height="4.5" rx="2.2" stroke="#b0b0b0" stroke-width="1.2"/>
  <rect x="732" y="495.5" width="8" height="7" fill="#e8e8e8" stroke="#e8e8e8"/><circle cx="736" cy="499" r="1.8" fill="#333" stroke="none"/>
  <circle cx="755" cy="499" r="3.6" fill="#e0e0e0" stroke="#e0e0e0"/><path d="M753 501l4-4" stroke="#4a4a4a" stroke-width="1.2"/>
  <path d="M771.5 496v7h8.5v-6h-4l-1-1z" fill="#e0e0e0" stroke="#e0e0e0"/>
  <path d="M792.5 495.5h7v8h-7z" fill="#e0e0e0" stroke="#e0e0e0"/><path d="M793 501l2.5 2.5" stroke="#555" stroke-width="1.4"/>
  <path d="M812 497h8M813 497.5v6h6v-6M815 496h2" stroke="#8a8a8a" stroke-width="1.2"/>
 </g>
 <g fill="#cfcfcf">
  <path d="M831.5 48l-3 2.5 3 2.5zM835 48l-3 2.5 3 2.5z" transform="translate(3,0)"/>
  <text x="711" y="503" font-family="Liberation Serif" font-style="italic" font-size="11" fill="#aaa">fx</text>
  <circle cx="758.5" cy="503" r=".9" fill="#e0e0e0"/>
 </g>
</svg>
<svg class="a" style="left:0;top:0" width="875" height="633" viewBox="0 0 875 633">
<filter id="thf" color-interpolation-filters="sRGB"><feComponentTransfer><feFuncR type="linear" slope="1.8" intercept="-0.8"/><feFuncG type="linear" slope="1.8" intercept="-0.8"/><feFuncB type="linear" slope="1.8" intercept="-0.8"/></feComponentTransfer></filter>
<clipPath id="thc"><rect x="678" y="135" width="23" height="23.5"/></clipPath>
<g clip-path="url(#thc)"><rect x="678" y="135" width="23" height="23.5" fill="#fff"/><g filter="url(#thf)"><use href="#hp" transform="translate(673.1 132.9) scale(0.04457)"/></g></g>
</svg>
<div class="a" style="left:159px;top:190px;width:386px;height:145px;background:#ececec;border-radius:4px;box-shadow:0 10px 28px rgba(0,0,0,.45),0 0 0 1px rgba(0,0,0,.07)">
  <div class="a" style="left:0;top:0;width:386px;height:17px;background:linear-gradient(#ebebeb,#d6d6d6);border-radius:4px 4px 0 0;border-bottom:1px solid #c8c8c8"></div>
  <div id="t_title" class="a dt" style="left:0;top:3px;width:386px;text-align:center;color:#4a4a4a">Duplicate Layer</div>
  <div id="t_dup" class="a dt" style="left:20px;top:26px">Duplicate:</div>
  <div id="t_bg" class="a dt" style="left:72px;top:26px">Background</div>
  <div id="t_as" class="a dt" style="left:52px;top:48px">As:</div>
  <div class="a" style="left:69px;top:44px;width:232px;height:19px;background:#fff;border:1px solid #b9b9b9"></div>
  <div id="t_hp" class="a dt" style="left:72px;top:48px">headphones</div>
  <div class="a" style="left:8px;top:77px;width:292px;height:59px;border:1px solid #c9c9c9;border-radius:2px"></div>
  <div class="a" style="left:20px;top:72px;width:56px;height:10px;background:#ececec"></div>
  <div id="t_dest" class="a dt" style="left:22px;top:71px">Destination</div>
  <div id="t_doc" class="a dt" style="left:16px;top:90px">Document:</div>
  <div class="a" style="left:71px;top:89px;width:220px;height:15px;background:#fff;border-radius:3px;box-shadow:0 0 0 1px #cfcfcf"></div>
  <div class="a" style="left:278px;top:89px;width:13px;height:15px;background:linear-gradient(#5fadf8,#1677ee);border-radius:0 3px 3px 0"></div>
  <svg class="a" style="left:278px;top:89px" width="13" height="15"><path d="M4 6l2.5-2.5L9 6M4 9l2.5 2.5L9 9" fill="none" stroke="#fff" stroke-width="1.3"/></svg>
  <div id="t_mp" class="a dt" style="left:78px;top:90px">Music Poster.psd</div>
  <div id="t_name" class="a dt" style="left:36px;top:115px;color:#a8a8a8">Name:</div>
  <div class="a" style="left:69px;top:111px;width:224px;height:18px;background:#fff;border:1px solid #b9b9b9"></div>
  <div class="a" style="left:316.5px;top:27px;width:56.5px;height:15.5px;background:linear-gradient(#6ab4fa,#1a7af3);border-radius:3px;box-shadow:0 0 0 .5px #3c8ef0"></div>
  <div id="t_ok" class="a dt" style="left:316.5px;top:28.5px;width:57px;text-align:center;color:#fff">OK</div>
  <div class="a" style="left:317px;top:52.5px;width:56px;height:15px;background:#fff;border-radius:3px;box-shadow:0 0 0 1px #cdcdcd,0 1px 1px rgba(0,0,0,.12)"></div>
  <div id="t_cancel" class="a dt" style="left:317px;top:54px;width:56px;text-align:center">Cancel</div>
</div>
</body></html>
